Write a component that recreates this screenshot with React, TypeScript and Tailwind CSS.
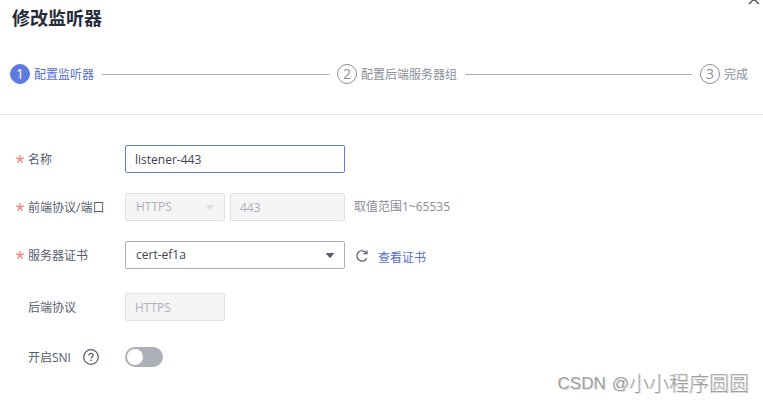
import { useState } from "react";
import type { ReactNode } from "react";

const steps = ["配置监听器", "配置后端服务器组", "完成"];

function Steps({ current }: { current: number }) {
  return (
    <ol className="flex items-center border-b border-[#dfe1e6] pt-8 pr-[15px] pb-[30px] pl-[10px]">
      {steps.map((title, index) => (
        <li
          key={title}
          className={"flex items-center " + (index < steps.length - 1 ? "flex-auto" : "")}
          aria-current={index === current ? "step" : undefined}
        >
          <span
            className={
              "flex size-5 shrink-0 items-center justify-center rounded-full border text-sm leading-none " +
              (index === current
                ? "border-[#5e7ce0] bg-[#5e7ce0] font-medium text-white"
                : "border-[#8a8e99] text-[#8a8e99]")
            }
          >
            {index + 1}
          </span>
          <span
            className={
              "ml-1 pt-0.5 text-xs whitespace-nowrap " +
              (index === current ? "text-[#526ecc]" : "text-[#8a8e99]")
            }
          >
            {title}
          </span>
          {index < steps.length - 1 && <span className="mx-2 h-px flex-1 bg-[#adb0b8]" />}
        </li>
      ))}
    </ol>
  );
}

function RequiredMark() {
  return (
    <svg
      viewBox="0 0 8 8"
      className="size-2"
      stroke="#f88a86"
      strokeWidth="1.5"
      strokeLinecap="round"
      aria-hidden="true"
    >
      <path d="M4 4V.6M4 4 .7 3M4 4l3.3-1M4 4 1.9 7.2M4 4l2.1 3.2" />
    </svg>
  );
}

function Caret() {
  return (
    <svg
      viewBox="0 0 8 5"
      className="pointer-events-none absolute top-3 right-[11px] h-[5px] w-2 fill-current"
      aria-hidden="true"
    >
      <path d="M.5 0h7a.5.5 0 0 1 .4.8L4.4 4.8a.5.5 0 0 1-.8 0L.1.8A.5.5 0 0 1 .5 0Z" />
    </svg>
  );
}

function Row({
  label,
  htmlFor,
  required,
  extra,
  children,
}: {
  label: string;
  htmlFor: string;
  required?: boolean;
  extra?: ReactNode;
  children: ReactNode;
}) {
  return (
    <div className="flex min-h-7 items-center">
      <div className="flex w-[109px] shrink-0 items-center">
        <span className="mr-1 w-2">{required && <RequiredMark />}</span>
        <label htmlFor={htmlFor} className="pt-0.5 text-[#575d6c]">
          {label}
        </label>
        {extra}
      </div>
      {children}
    </div>
  );
}

const control = "h-7 appearance-none rounded-xs border text-xs outline-none";
const enabled = "text-[#3d4350]";
const disabled = "border-[#dfe1e6] bg-[#f5f5f5] text-[#adb0b8] opacity-100";

export default function App() {
  const [name, setName] = useState("listener-443");
  const [sni, setSni] = useState(false);

  return (
    <main className="relative min-h-screen overflow-hidden bg-white font-['Open_Sans','Noto_Sans_CJK_SC',sans-serif] text-xs text-[#252b3a]">
      <button type="button" aria-label="关闭" className="absolute -top-[7px] right-[3px] text-[#575d6c]">
        <svg viewBox="0 0 12 12" className="size-3" fill="none" stroke="currentColor" strokeWidth="1.5">
          <path d="m1 1 10 10M11 1 1 11" />
        </svg>
      </button>
      <h1 className="px-3 pt-1 text-lg leading-7 font-bold">修改监听器</h1>
      <Steps current={0} />

      <form className="flex flex-col gap-5 pt-[30px] pl-4" onSubmit={(e) => e.preventDefault()}>
        <Row label="名称" htmlFor="name" required>
          <input
            id="name"
            value={name}
            onChange={(e) => setName(e.target.value)}
            className={control + " w-[220px] border-[#5e7ce0] px-[9px] " + enabled}
          />
        </Row>

        <Row label="前端协议/端口" htmlFor="protocol" required>
          <div className="relative mr-[5px] w-[100px] text-[#dfe1e6]">
            <select id="protocol" disabled className={control + " w-full px-[10px] " + disabled}>
              <option>HTTPS</option>
            </select>
            <Caret />
          </div>
          <input
            aria-label="端口"
            disabled
            value="443"
            className={control + " w-[115px] px-[9px] " + disabled}
          />
          <span className="ml-[9px] text-[#8a8e99]">取值范围1~65535</span>
        </Row>

        <Row label="服务器证书" htmlFor="cert" required>
          <div className="relative w-[220px] text-[#575d6c]">
            <select id="cert" className={control + " w-full border-[#adb0b8] px-[10px] " + enabled}>
              <option>cert-ef1a</option>
            </select>
            <Caret />
          </div>
          <button type="button" aria-label="刷新" className="ml-[10px] pt-0.5 text-[#575d6c]">
            <svg viewBox="0 0 14 14" className="size-[14px]" fill="none" stroke="currentColor" strokeWidth="1.2">
              <path d="M11.8 9.2A5.2 5.2 0 1 1 11.6 4.3" />
              <path d="M12 1.5v3.2H8.6" />
            </svg>
          </button>
          <a href="#cert" className="ml-[9px] pt-1.5 text-[#526ecc]">
            查看证书
          </a>
        </Row>

        <div className="pt-1">
          <Row label="后端协议" htmlFor="backend">
            <input
              id="backend"
              disabled
              value="HTTPS"
              className={control + " w-[100px] px-[9px] " + disabled}
            />
          </Row>
        </div>

        <div className="pt-0.5">
          <Row
            label="开启SNI"
            htmlFor="sni"
            extra={
              <button type="button" aria-label="帮助" className="ml-3 text-[#575d6c]">
                <svg viewBox="0 0 16 16" className="size-4" fill="none" stroke="currentColor" strokeWidth="1.3">
                  <circle cx="8" cy="8" r="7.3" />
                  <path d="M5.8 6.4c0-1.3.9-2.1 2.2-2.1s2.2.8 2.2 2c0 1.5-2.1 1.7-2.1 3.2" />
                  <path d="M8.1 10.7v1.4" strokeWidth="1.5" />
                </svg>
              </button>
            }
          >
            <input
              id="sni"
              type="checkbox"
              role="switch"
              checked={sni}
              onChange={(e) => setSni(e.target.checked)}
              className="flex h-5 w-[38px] appearance-none items-center rounded-full bg-[#adb0b8] px-[2px] before:size-4 before:rounded-full before:bg-white checked:justify-end checked:bg-[#5e7ce0]"
            />
          </Row>
        </div>
      </form>

      <p className="pointer-events-none absolute right-[14px] bottom-1 flex items-center gap-[6px] font-['Liberation_Sans','Noto_Sans_CJK_SC',sans-serif] text-[17px] leading-7 text-[#a0a0a0] text-shadow-[1px_1px_0_#dddddd]">
        <span>CSDN</span>
        <span className="flex items-center">
          @<span className="text-xl leading-7 font-light">小小程序圆圆</span>
        </span>
      </p>
    </main>
  );
}
